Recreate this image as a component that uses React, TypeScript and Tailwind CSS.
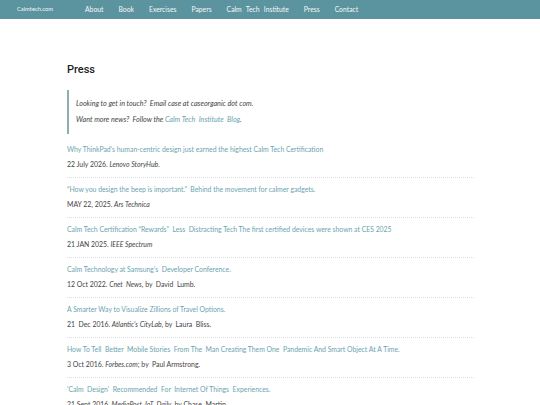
import React from "react";

const items: { title: string; meta: React.ReactNode }[] = [
  {
    title: "Why ThinkPad's human-centric design just earned the highest Calm Tech Certification",
    meta: (<>22 July 2026. <i>Lenovo StoryHub.</i></>),
  },
  {
    title: "\u201CHow you design the beep is important.\u201D  Behind the movement for calmer gadgets.",
    meta: (<>MAY 22, 2025. <i>Ars Technica</i></>),
  },
  {
    title: "Calm Tech Certification \u201CRewards\u201D  Less  Distracting Tech The first certified devices were shown at CES 2025",
    meta: (<>21 JAN 2025. <i>IEEE Spectrum</i></>),
  },
  {
    title: "Calm Technology at Samsung's  Developer Conference.",
    meta: (<>12 Oct 2022. <i>Cnet  News</i>, by  David  Lumb.</>),
  },
  {
    title: "A Smarter Way to Visualize Zillions of Travel Options.",
    meta: (<>21  Dec 2016. <i>Atlantic's CityLab</i>, by  Laura  Bliss.</>),
  },
  {
    title: "How To Tell  Better  Mobile Stories  From The  Man Creating Them One  Pandemic And Smart Object At A Time.",
    meta: (<>3 Oct 2016. <i>Forbes.com</i>; by  Paul Armstrong.</>),
  },
  {
    title: "'Calm  Design'  Recommended  For  Internet Of Things  Experiences.",
    meta: (<>21 Sept 2016. <i>MediaPost  IoT  Daily</i>, by Chase  Martin.</>),
  },
];

export default function App() {
  const font = { fontFamily: "Lato, 'Noto Sans', sans-serif" };
  return (
    <div className="w-[540px] h-[405px] overflow-hidden bg-white" style={font}>
      <nav className="h-[19px] bg-[#5b939f] flex items-center text-[#f4f8f9] text-[6.8px] whitespace-pre">
        <span className="ml-[17px] text-[5.8px] w-[68px]">Calmtech.com</span>
        <div className="flex gap-[15px]">
          <span>About</span>
          <span>Book</span>
          <span>Exercises</span>
          <span>Papers</span>
          <span className="[word-spacing:2.5px]">Calm Tech Institute</span>
          <span>Press</span>
          <span>Contact</span>
        </div>
      </nav>
      <main className="ml-[67px] w-[407px]">
        <h1 className="text-[11px] font-medium text-[#222] mt-[44px] leading-[14px]" style={{ fontFamily: "Roboto, sans-serif" }}>Press</h1>
        <blockquote className="mt-[13px] border-l-[2px] border-[#8fadb4] pl-[7px] py-[6px] text-[7.2px] italic text-[#444] leading-[16px] whitespace-pre">
          <p>Looking to get in touch?  Email case at caseorganic dot com.</p>
          <p>Want more news?  Follow the <span className="text-[#6ba4ae]">Calm Tech  Institute  Blog</span>.</p>
        </blockquote>
        <div className="mt-[4px]">
          {items.map((it, i) => (
            <div key={i} className="border-b border-dotted border-[#dcdcdc] pt-[3px] pb-[6px] h-[40px]">
              <div className="text-[6.85px] text-[#6ba4ae] leading-[16px] whitespace-pre">{it.title}</div>
              <div className="text-[6.9px] text-[#444] leading-[15px] whitespace-pre">{it.meta}</div>
            </div>
          ))}
        </div>
      </main>
    </div>
  );
}
